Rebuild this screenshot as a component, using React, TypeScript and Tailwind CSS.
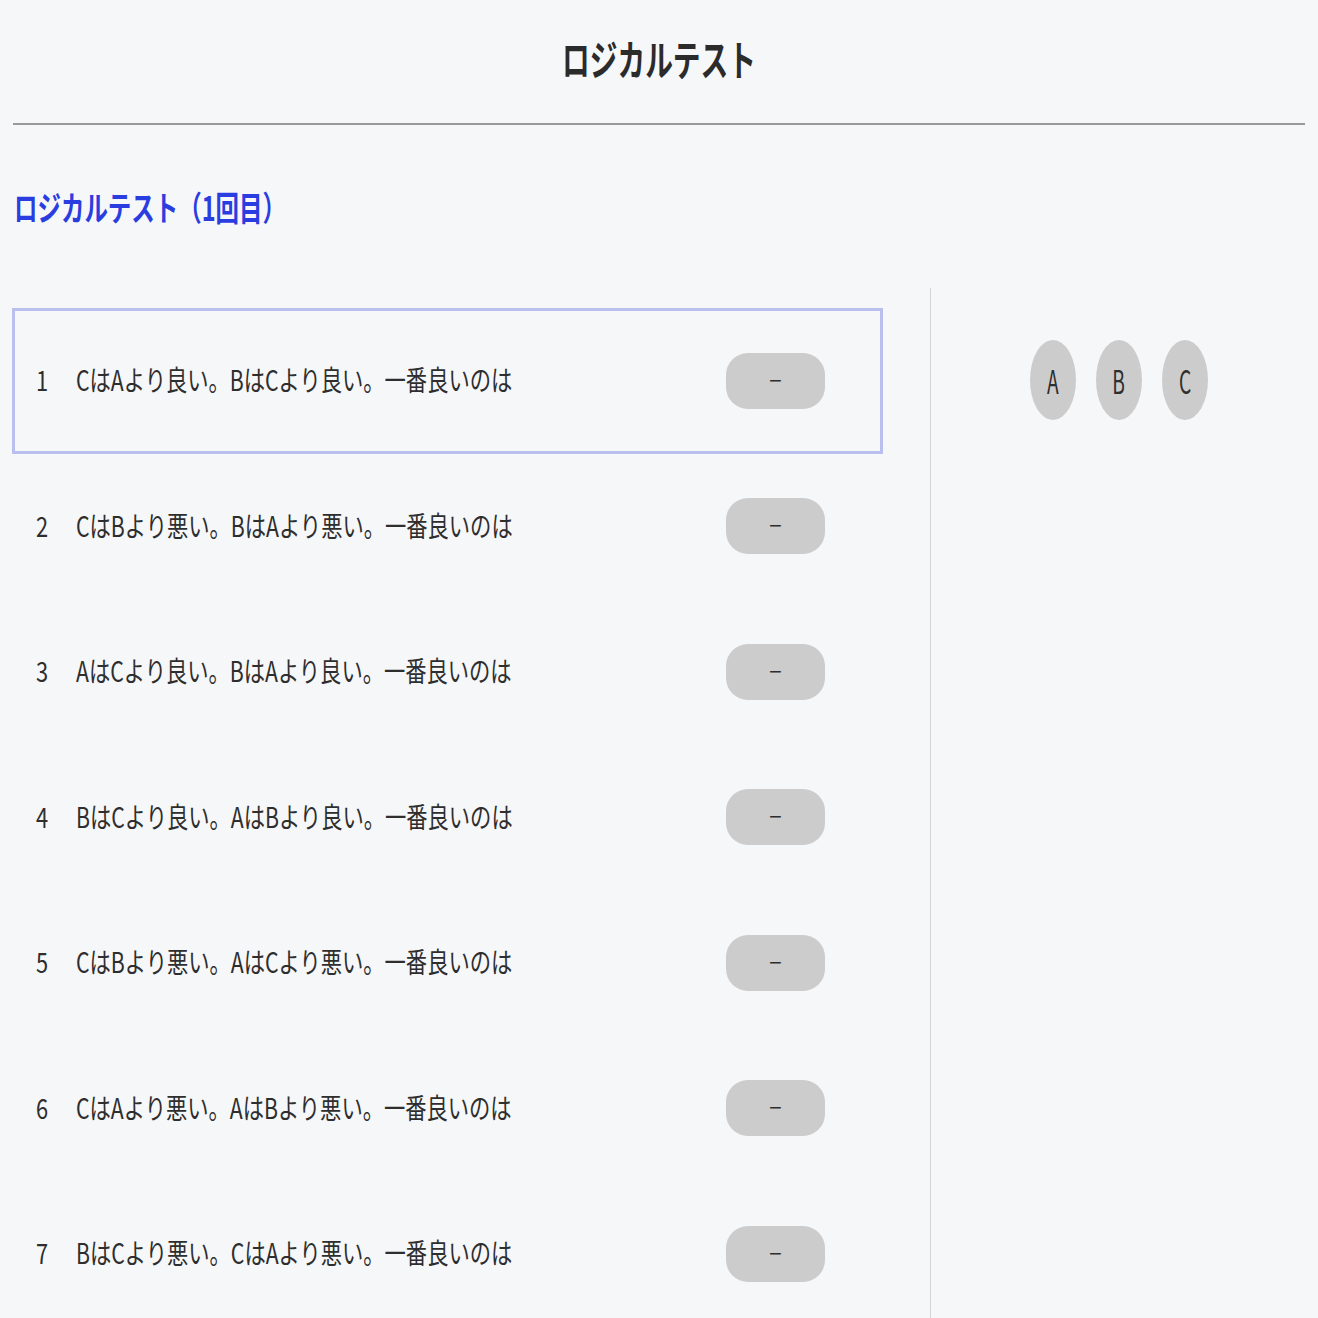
const questions = [
  'CはAより良い。BはCより良い。一番良いのは',
  'CはBより悪い。BはAより悪い。一番良いのは',
  'AはCより良い。BはAより良い。一番良いのは',
  'BはCより良い。AはBより良い。一番良いのは',
  'CはBより悪い。AはCより悪い。一番良いのは',
  'CはAより悪い。AはBより悪い。一番良いのは',
  'BはCより悪い。CはAより悪い。一番良いのは',
];

const choices = ['A', 'B', 'C'];

const jp = "font-['Noto_Sans_CJK_JP','Noto_Sans',sans-serif]";

const QuestionRow = ({ no, text, active }: { no: number; text: string; active: boolean }) => (
  <div
    className={`h-[145.5px] flex items-center border-[3px] ${
      active ? 'border-[#babff0]' : 'border-transparent'
    }`}
  >
    <div className="w-[61px] pl-[21px] shrink-0">
      <span className={`inline-block origin-left scale-x-[0.78] text-[28px] leading-none text-[#2e2e2e] ${jp}`}>
        {no}
      </span>
    </div>
    <div className="flex-1 overflow-visible whitespace-nowrap">
      <span className={`inline-block origin-left scale-x-[0.76] text-[28px] leading-none text-[#2e2e2e] ${jp}`}>
        {text}
      </span>
    </div>
    <button className="w-[99px] h-[56px] mr-[55px] rounded-[22px] bg-[#cccccc] flex items-center justify-center shrink-0">
      <span className="text-[22px] leading-none text-[#2e2e2e] font-['Liberation_Sans',sans-serif]">−</span>
    </button>
  </div>
);

export default function App() {
  return (
    <div className={`min-h-[1318px] bg-[#f6f7f9] ${jp}`}>
      <header className="h-[125px] px-[13px] flex flex-col">
        <div className="flex-1 flex items-center justify-center pb-[8px]">
          <h1 className="inline-block scale-x-[0.66] text-[42px] font-bold leading-none text-[#2b2b2b]">
            ロジカルテスト
          </h1>
        </div>
        <div className="h-[2px] bg-[#9a9a9a]" />
      </header>

      <div className="h-[163px] px-[14px] pt-[65px]">
        <h2 className="inline-block origin-left scale-x-[0.69] text-[34px] font-bold leading-none text-[#2a3de0] whitespace-nowrap">
          ロジカルテスト（1回目）
        </h2>
      </div>

      <div className="flex">
        <div className="w-[930px] pl-[12px] pr-[47px] pt-[20px]">
          {questions.map((q, i) => (
            <QuestionRow key={i} no={i + 1} text={q} active={i === 0} />
          ))}
        </div>
        <div className="w-[1px] bg-[#d6d6d6] self-stretch" />
        <div className="flex-1 pl-[99px] pt-[52px]">
          <div className="flex gap-[20px]">
            {choices.map((c) => (
              <div
                key={c}
                className="w-[46px] h-[80px] rounded-[50%] bg-[#cccccc] flex items-center justify-center"
              >
                <span className="inline-block scale-x-[0.6] text-[32px] leading-none text-[#2e2e2e]">{c}</span>
              </div>
            ))}
          </div>
        </div>
      </div>
    </div>
  );
}
